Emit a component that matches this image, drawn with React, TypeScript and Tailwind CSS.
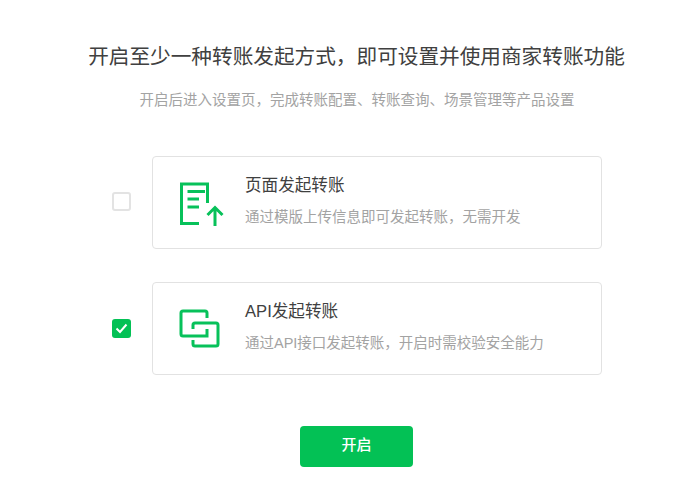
const FONT = "font-['Liberation_Sans','Noto_Sans_CJK_SC',sans-serif]";
const COMMA = "\uFF0C";

function DocUploadIcon() {
  return (
    <svg width="50" height="50" viewBox="0 0 50 50" fill="none" stroke="#07c15a" strokeWidth="3">
      <path d="M24 45.5H6.5V6H32.5V25" />
      <path d="M12.5 13.5H30M12.5 21H24M12.5 29H24" />
      <path d="M40 48V30M32.5 37L40 29.5L47.5 37" />
    </svg>
  );
}

function LinkIcon() {
  return (
    <svg width="50" height="50" viewBox="0 0 50 50" fill="none" stroke="#07c15a" strokeWidth="3">
      <path d="M32 14V9Q32 7 30 7H8Q6 7 6 9V30Q6 32 8 32H32V25" />
      <path d="M18 25V21Q18 19 20 19H41Q43 19 43 21V40Q43 42 41 42H20Q18 42 18 40V36" />
    </svg>
  );
}

function Option({
  checked,
  icon,
  title,
  desc,
}: {
  checked: boolean;
  icon: React.ReactNode;
  title: string;
  desc: string;
}) {
  return (
    <div className="flex items-center">
      {checked ? (
        <div className="w-[19px] h-[19px] ml-[112px] rounded-[3px] bg-[#03c155] flex items-center justify-center">
          <svg width="13" height="11" viewBox="0 0 13 11" fill="none" stroke="#fff" strokeWidth="2">
            <path d="M1.5 5.5 5 9l6.5-7.5" />
          </svg>
        </div>
      ) : (
        <div className="w-[19px] h-[19px] ml-[112px] mb-[2px] rounded-[3px] border-2 border-[#e3e3e3] bg-white" />
      )}
      <div className="ml-[21px] w-[450px] h-[93px] rounded-[4px] border border-[#e2e2e2] bg-white flex items-center">
        <div className="ml-[22px] w-[50px] h-[50px]">{icon}</div>
        <div className="ml-[20px] pb-[4px] flex flex-col">
          <div className="text-[16.6px] leading-[24px] text-[#404040]">{title}</div>
          <div className="mt-[9px] text-[14.5px] leading-[20px] text-[#a3a3a3]">{desc}</div>
        </div>
      </div>
    </div>
  );
}

export default function App() {
  return (
    <div className={`${FONT} w-[690px] h-[502px] bg-white overflow-hidden flex flex-col`}>
      <h1 className="mt-[43px] pl-[23px] text-center text-[20.65px] leading-[28px] font-normal text-[#404040]">
        {`开启至少一种转账发起方式${COMMA}即可设置并使用商家转账功能`}
      </h1>
      <p className="mt-[19px] pl-[24px] text-center text-[14.5px] leading-[20px] text-[#a3a3a3]">
        {`开启后进入设置页${COMMA}完成转账配置、转账查询、场景管理等产品设置`}
      </p>

      <div className="mt-[46px] flex flex-col gap-[33px]">
        <Option
          checked={false}
          icon={<DocUploadIcon />}
          title="页面发起转账"
          desc={`通过模版上传信息即可发起转账${COMMA}无需开发`}
        />
        <Option
          checked
          icon={<LinkIcon />}
          title="API发起转账"
          desc={`通过API接口发起转账${COMMA}开启时需校验安全能力`}
        />
      </div>

      <button className="mt-[51px] ml-[300px] w-[113px] h-[41px] pb-[2px] rounded-[4px] bg-[#03c155] text-white text-[15px] font-medium">
        开启
      </button>
    </div>
  );
}
